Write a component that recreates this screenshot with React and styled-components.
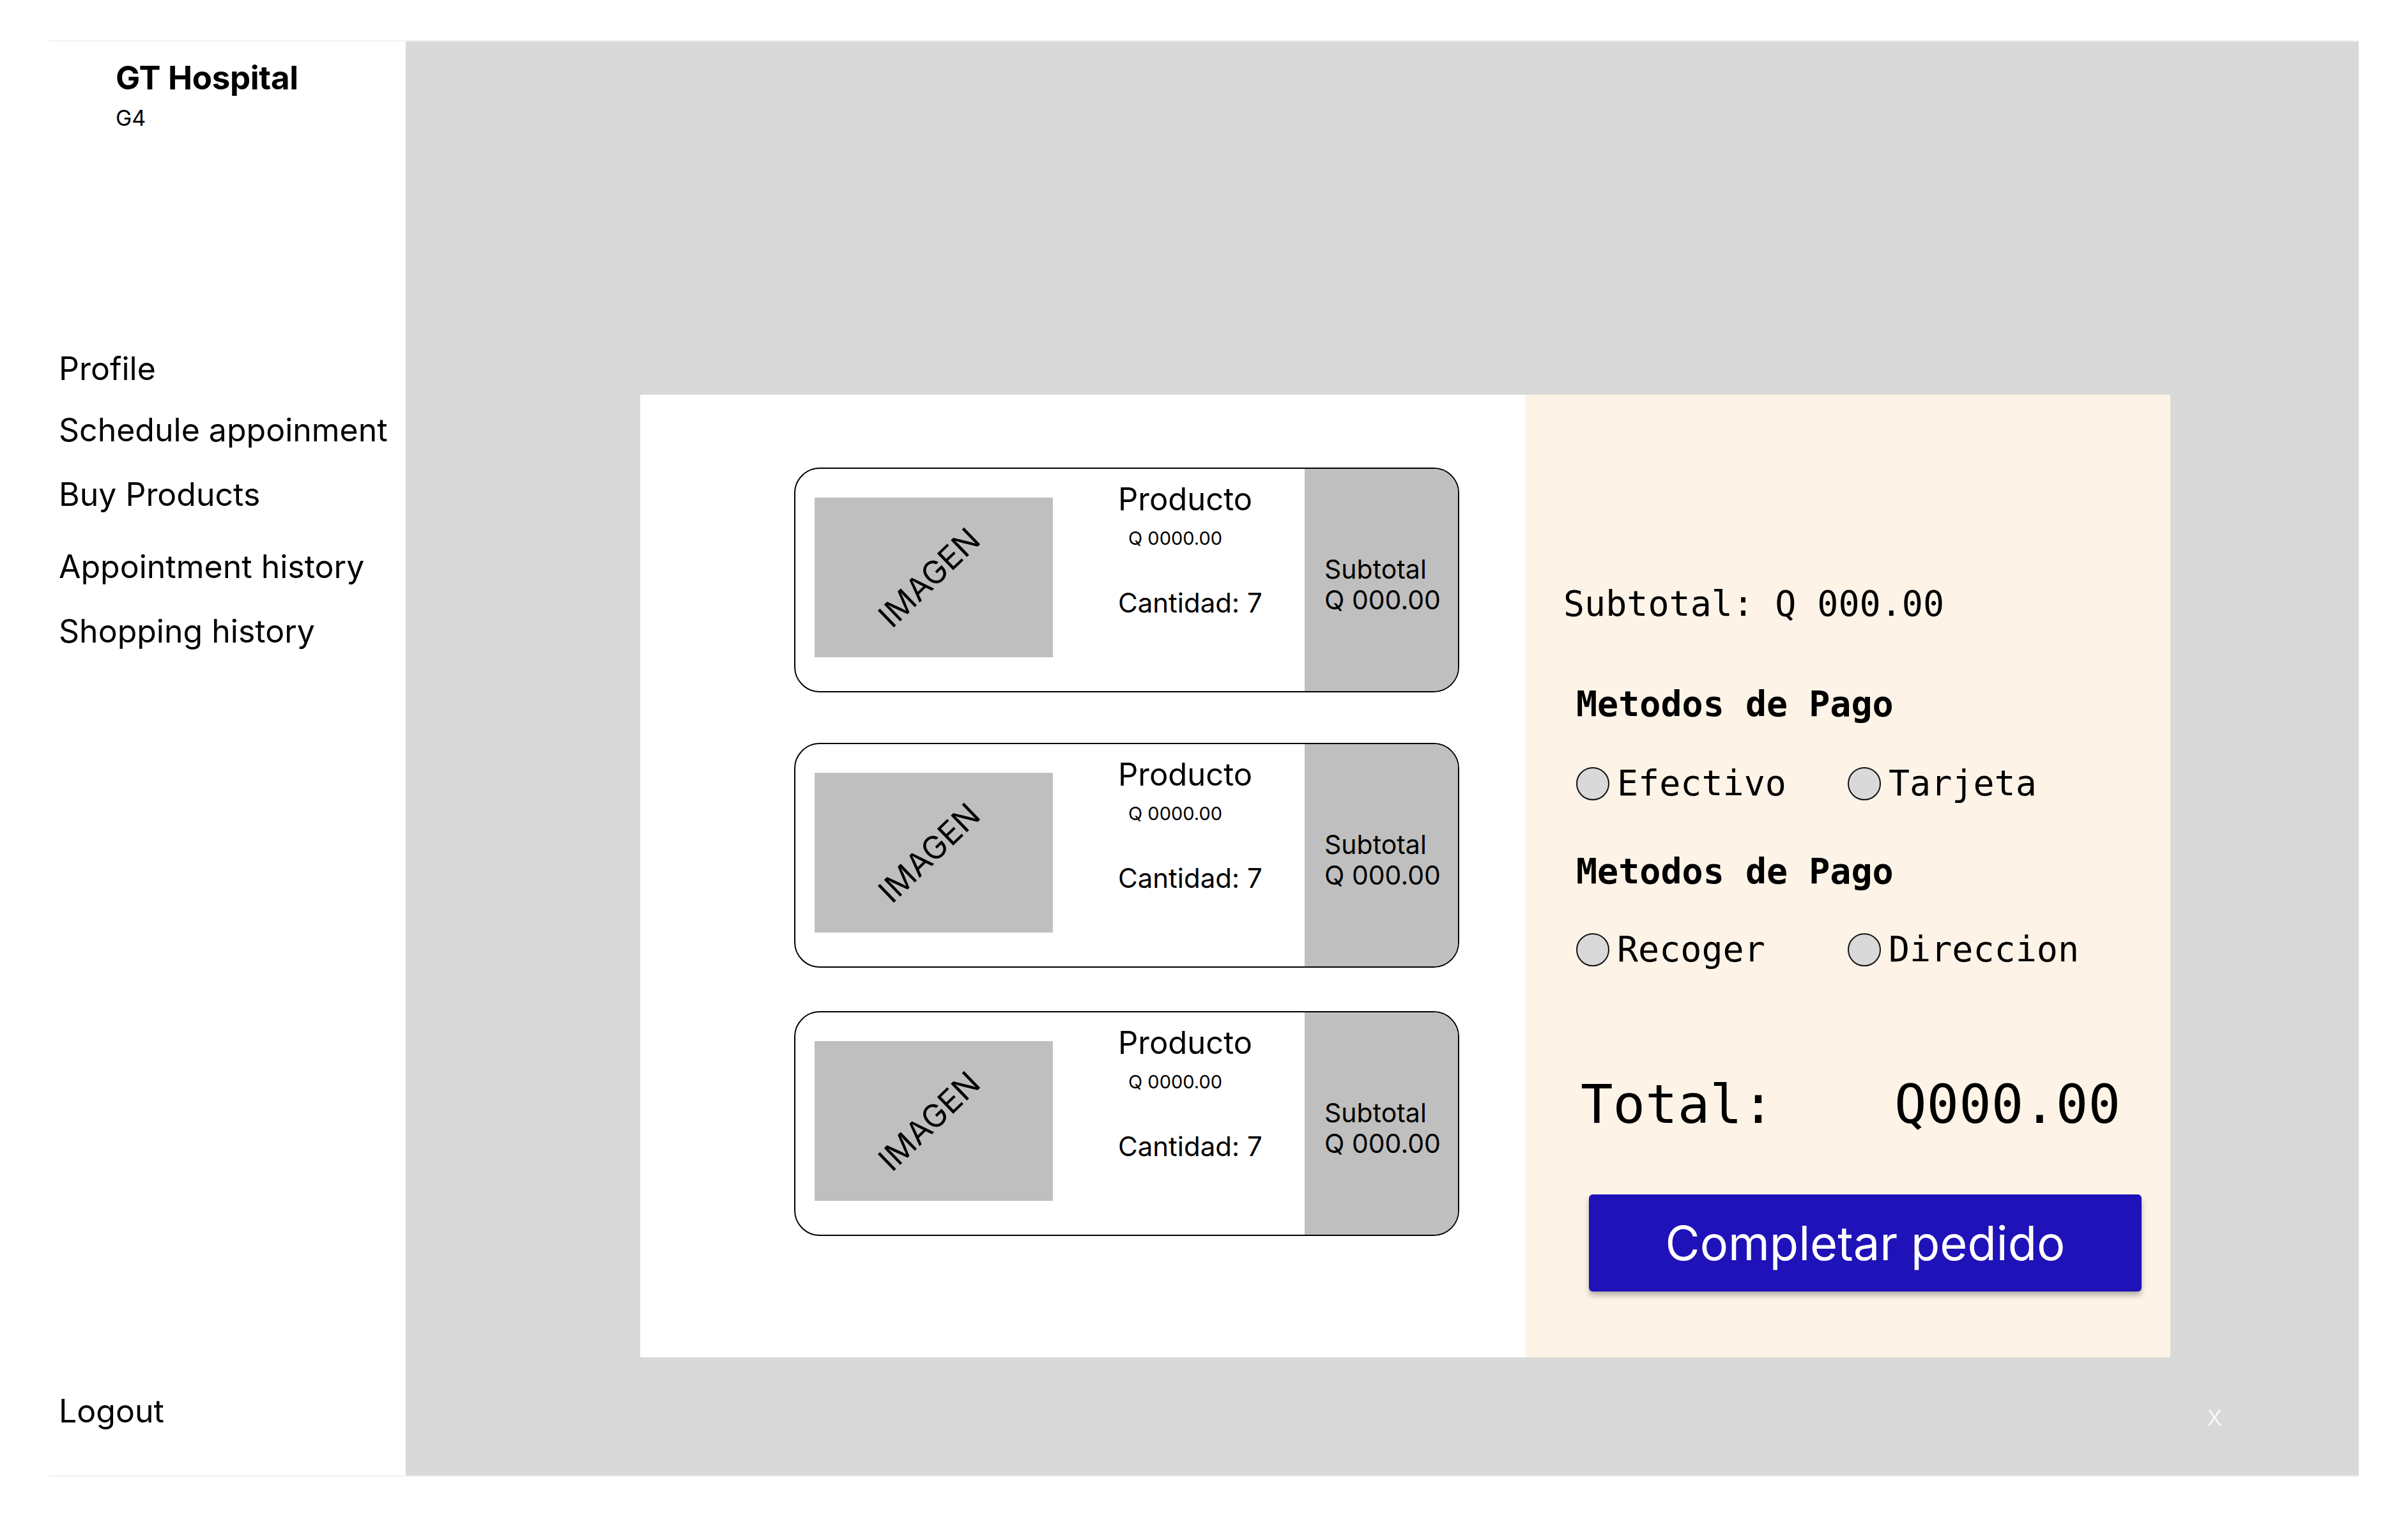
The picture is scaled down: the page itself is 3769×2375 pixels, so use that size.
import styled, { createGlobalStyle } from "styled-components";

const GlobalStyle = createGlobalStyle`
  html, body {
    margin: 0;
    padding: 0;
    background: #ffffff;
  }
  body {
    font-family: Inter, "Noto Sans", sans-serif;
    color: #000;
  }
`;

const Frame = styled.div`
  margin: 63px 0 0 77px;
  width: 3615px;
  height: 2245px;
  display: flex;
  border-top: 2px solid #f1f1f1;
  border-bottom: 2px solid #f1f1f1;
`;

const Sidebar = styled.aside`
  width: 558px;
  flex-shrink: 0;
  display: flex;
  flex-direction: column;
  background: #fff;
  padding-bottom: 76px;
  box-sizing: border-box;
`;

const Brand = styled.div`
  padding: 31px 0 0 104px;

  h1 {
    margin: 0;
    font-size: 51px;
    line-height: 51px;
    font-weight: 700;
    letter-spacing: -0.3px;
  }

  span {
    display: block;
    margin-top: 21px;
    font-size: 34px;
    line-height: 34px;
  }
`;

const Nav = styled.nav`
  display: flex;
  flex-direction: column;
  padding-left: 15px;
  margin-top: 350px;
`;

const NavItem = styled.a`
  font-size: 50px;
  line-height: 50px;
  color: #000;
  text-decoration: none;
  margin-top: ${(p) => p.$mt || 0}px;
`;

const Logout = styled(NavItem)`
  margin-top: auto;
  padding-left: 15px;
`;

const Main = styled.main`
  flex: 1;
  background: #d9d9d9;
  display: flex;
  flex-direction: column;
  padding: 553px 0 0 367px;
  box-sizing: border-box;
`;

const Panel = styled.section`
  display: flex;
  width: 2395px;
  height: 1507px;
`;

const CartList = styled.div`
  width: 1385px;
  background: #fff;
  display: flex;
  flex-direction: column;
  padding-left: 241px;
  box-sizing: border-box;
`;

const Card = styled.div`
  width: 1041px;
  height: 352px;
  box-sizing: border-box;
  border: 2px solid #000;
  border-radius: 40px;
  overflow: hidden;
  display: flex;
  background: #fff;
  margin-top: ${(p) => p.$mt}px;
`;

const ImageBox = styled.div`
  width: 373px;
  height: 250px;
  margin: 45px 0 0 30px;
  background: #bfbfbf;
  display: flex;
  align-items: center;
  justify-content: center;

  span {
    font-size: 50px;
    transform: rotate(-44deg);
    margin-left: -14px;
  }
`;

const Details = styled.div`
  display: flex;
  flex-direction: column;
  margin-left: 102px;
  padding-top: 23px;
`;

const ProductName = styled.div`
  font-size: 49px;
  line-height: 49px;
`;

const Price = styled.div`
  font-size: 29px;
  line-height: 29px;
  margin: 22px 0 0 16px;
`;

const Quantity = styled.div`
  font-size: 42px;
  line-height: 42px;
  margin-top: 66px;
`;

const SubtotalStrip = styled.div`
  margin-left: auto;
  width: 240px;
  background: #bfbfbf;
  padding: 137px 0 0 31px;
  box-sizing: border-box;
  font-size: 41px;
  line-height: 41px;

  div + div {
    margin-top: 7px;
  }
`;

const Checkout = styled.div`
  width: 1010px;
  background: #fdf4e7;
  display: flex;
  flex-direction: column;
  padding-top: 300px;
  box-sizing: border-box;
  font-family: "DejaVu Sans Mono", "Liberation Mono", monospace;
`;

const MonoLine = styled.div`
  font-size: 55px;
  line-height: 55px;
  white-space: pre;
  font-weight: ${(p) => (p.$bold ? 700 : 400)};
  margin: ${(p) => p.$mt || 0}px 0 0 ${(p) => p.$ml}px;
`;

const RadioRow = styled.div`
  display: flex;
  align-items: center;
  margin: ${(p) => p.$mt}px 0 0 80px;
`;

const RadioOption = styled.label`
  width: 425px;
  display: flex;
  align-items: center;
  gap: 12px;
  font-size: 55px;
  line-height: 55px;
`;

const RadioDot = styled.span`
  width: 48px;
  height: 48px;
  border-radius: 50%;
  border: 2px solid #111;
  background: #d9d9d9;
  flex-shrink: 0;
`;

const TotalRow = styled.div`
  display: flex;
  justify-content: space-between;
  margin: 173px 78px 0 87px;
  font-size: 84px;
  line-height: 84px;
`;

const SubmitButton = styled.button`
  margin: 99px 0 0 100px;
  width: 865px;
  height: 152px;
  border: none;
  border-radius: 6px;
  background: #1f12b8;
  color: #fff;
  font-family: Inter, "Noto Sans", sans-serif;
  font-size: 74px;
  box-shadow: 0 6px 8px rgba(0, 0, 0, 0.28);
  cursor: pointer;
`;

const CloseMark = styled.div`
  margin: 78px 0 0 2453px;
  font-size: 34px;
  line-height: 34px;
  font-weight: 300;
  color: #fff;
`;

const navLinks = [
  { label: "Profile", mt: 0 },
  { label: "Schedule appoinment", mt: 46 },
  { label: "Buy Products", mt: 51 },
  { label: "Appointment history", mt: 63 },
  { label: "Shopping history", mt: 51 },
];

const cartItems = [{ mt: 114 }, { mt: 79 }, { mt: 68 }];

const Radio = ({ label }) => (
  <RadioOption>
    <RadioDot />
    {label}
  </RadioOption>
);

const App = () => (
  <>
    <GlobalStyle />
    <Frame>
      <Sidebar>
        <Brand>
          <h1>GT Hospital</h1>
          <span>G4</span>
        </Brand>
        <Nav>
          {navLinks.map((l) => (
            <NavItem key={l.label} $mt={l.mt}>{l.label}</NavItem>
          ))}
        </Nav>
        <Logout>Logout</Logout>
      </Sidebar>
      <Main>
        <Panel>
          <CartList>
            {cartItems.map((item, i) => (
              <Card key={i} $mt={item.mt}>
                <ImageBox>
                  <span>IMAGEN</span>
                </ImageBox>
                <Details>
                  <ProductName>Producto</ProductName>
                  <Price>Q 0000.00</Price>
                  <Quantity>Cantidad: 7</Quantity>
                </Details>
                <SubtotalStrip>
                  <div>Subtotal</div>
                  <div>Q 000.00</div>
                </SubtotalStrip>
              </Card>
            ))}
          </CartList>
          <Checkout>
            <MonoLine $ml={60}>Subtotal: Q 000.00</MonoLine>
            <MonoLine $bold $mt={102} $ml={80}>Metodos de Pago</MonoLine>
            <RadioRow $mt={69}>
              <Radio label="Efectivo" />
              <Radio label="Tarjeta" />
            </RadioRow>
            <MonoLine $bold $mt={83} $ml={80}>Metodos de Pago</MonoLine>
            <RadioRow $mt={67}>
              <Radio label="Recoger" />
              <Radio label="Direccion" />
            </RadioRow>
            <TotalRow>
              <span>Total:</span>
              <span>Q000.00</span>
            </TotalRow>
            <SubmitButton>Completar pedido</SubmitButton>
          </Checkout>
        </Panel>
        <CloseMark>X</CloseMark>
      </Main>
    </Frame>
  </>
);

export default App;
